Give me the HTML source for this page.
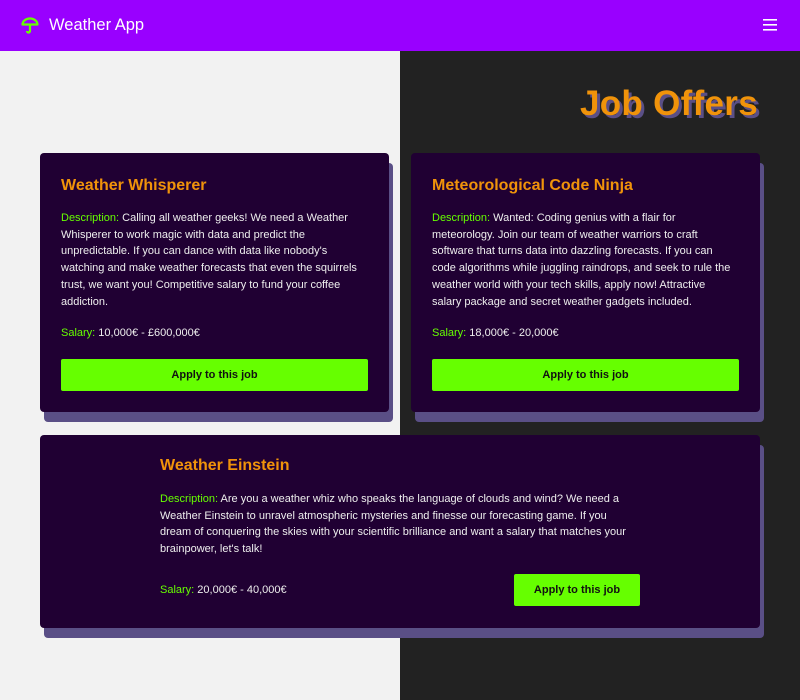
<!DOCTYPE html>
<html><head><style>
*{margin:0;padding:0;box-sizing:border-box}
body{width:800px;height:700px;overflow:hidden;font-family:"Liberation Sans",sans-serif;background:linear-gradient(90deg,#f2f2f2 0 400px,#222 400px);position:relative}
.nav{position:absolute;left:0;top:0;width:800px;height:51px;background:#9900ff;color:#fff}
.nav .t{position:absolute;left:49px;top:16px;font-size:16.5px}
h1{position:absolute;right:42px;top:84px;font-size:35px;font-weight:900;color:#f0930a;text-shadow:3px 3px 0 #5a4f86;letter-spacing:0.3px}
.card{position:absolute;background:#200033;border-radius:4px;box-shadow:4px 10px 0 #5a4f86;color:#eee;font-size:11px;line-height:16.7px}
.card h2{position:absolute;font-size:16px;color:#f0930a;font-weight:bold}
.g{color:#66ff00}
.p{position:absolute}
.btn{position:absolute;background:#66ff00;color:#111;font-weight:bold;font-size:11px;text-align:center;line-height:33px;height:32px;border-radius:2px}
</style></head><body>
<div class="nav">
<svg style="position:absolute;left:21px;top:17px" width="18" height="17" viewBox="0 0 18 17"><path d="M1.5 7.5 A7.5 6 0 0 1 16.5 7.5 Z" fill="none" stroke="#66ff00" stroke-width="2.2" stroke-linejoin="round"/><path d="M9 7.5 V14 a1.5 1.5 0 0 1 -3 0" fill="none" stroke="#66ff00" stroke-width="2.2"/></svg>
<div class="t">Weather App</div>
<svg style="position:absolute;left:763px;top:19px" width="14" height="12"><rect y="0" width="14" height="1.6" fill="#fff"/><rect y="5" width="14" height="1.6" fill="#fff"/><rect y="10" width="14" height="1.6" fill="#fff"/></svg>
</div>
<h1>Job Offers</h1>
<div class="card" style="left:40px;top:153px;width:349px;height:259px">
<h2 style="left:21px;top:25px">Weather Whisperer</h2>
<div class="p" style="left:21px;top:57px;width:300px"><span class="g">Description:</span> Calling all weather geeks! We need a Weather Whisperer to work magic with data and predict the unpredictable. If you can dance with data like nobody's watching and make weather forecasts that even the squirrels trust, we want you! Competitive salary to fund your coffee addiction.</div>
<div class="p" style="left:21px;top:172px"><span class="g">Salary:</span> 10,000€ - £600,000€</div>
<div class="btn" style="left:21px;top:206px;width:307px">Apply to this job</div>
</div>
<div class="card" style="left:411px;top:153px;width:349px;height:259px">
<h2 style="left:21px;top:25px">Meteorological Code Ninja</h2>
<div class="p" style="left:21px;top:57px;width:305px"><span class="g">Description:</span> Wanted: Coding genius with a flair for meteorology. Join our team of weather warriors to craft software that turns data into dazzling forecasts. If you can code algorithms while juggling raindrops, and seek to rule the weather world with your tech skills, apply now! Attractive salary package and secret weather gadgets included.</div>
<div class="p" style="left:21px;top:172px"><span class="g">Salary:</span> 18,000€ - 20,000€</div>
<div class="btn" style="left:21px;top:206px;width:307px">Apply to this job</div>
</div>
<div class="card" style="left:40px;top:435px;width:720px;height:193px">
<h2 style="left:120px;top:23px">Weather Einstein</h2>
<div class="p" style="left:120px;top:56px;width:480px"><span class="g">Description:</span> Are you a weather whiz who speaks the language of clouds and wind? We need a Weather Einstein to unravel atmospheric mysteries and finesse our forecasting game. If you dream of conquering the skies with your scientific brilliance and want a salary that matches your brainpower, let's talk!</div>
<div class="p" style="left:120px;top:147px"><span class="g">Salary:</span> 20,000€ - 40,000€</div>
<div class="btn" style="left:474px;top:139px;width:126px">Apply to this job</div>
</div>
</body></html>
